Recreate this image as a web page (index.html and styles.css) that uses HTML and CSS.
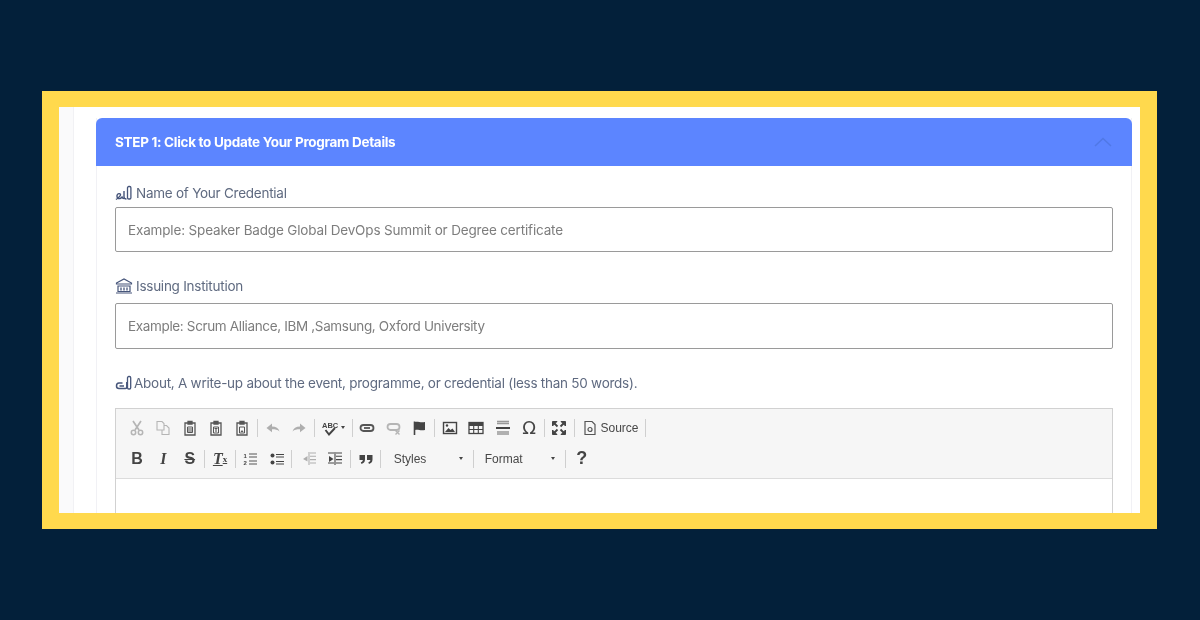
FILE: index.html
```html
<!DOCTYPE html>
<html lang="en">
<head>
  <meta charset="UTF-8">
  <title>Update Program Details</title>
  <link rel="stylesheet" href="styles.css">
</head>
<body>
<div class="frame">
  <div class="strip"></div>
  <div class="card">
    <div class="card-head">
      <span>STEP 1: Click to Update Your Program Details</span>
      <svg class="chevron" width="18" height="10" viewBox="0 0 18 10"><path d="M1 9 9 1.5 17 9" fill="none" stroke="#5078e6" stroke-width="1.5"/></svg>
    </div>
    <div class="card-body">
      <label class="field-label">
        <svg class="label-icon" width="18" height="16" viewBox="0 0 18 16"><path d="M1 14.500C3 13 6 11 5.500 9.500 5 8 2.500 8.500 2 10.500 1.700 12.500 3 14 5 13.500c1-.3 1.500-1 2-1.500.3 1 1 1.500 2 1.500" fill="none" stroke="#46557a" stroke-width="1.400"/><path d="M9 6v6c0 1.500 1 2 2.500 2" fill="none" stroke="#46557a" stroke-width="1.400"/><rect x="12.500" y="1.500" width="3.400" height="12.500" rx="1.300" fill="none" stroke="#46557a" stroke-width="1.300"/></svg>
        Name of Your Credential
      </label>
      <input class="text-input first" type="text" placeholder="Example: Speaker Badge Global DevOps Summit or Degree certificate">

      <label class="field-label second">
        <svg class="label-icon" width="18" height="16" viewBox="0 0 18 16"><path d="M1.500 5 9 1l7.500 4v1h-15zM1 15h16M3 8h12v5.500H3z" fill="none" stroke="#46557a" stroke-width="1.200"/><path d="M6 9.500v3M9 9.500v3M12 9.500v3" stroke="#46557a" stroke-width="1.300"/></svg>
        Issuing Institution
      </label>
      <input class="text-input institution" type="text" placeholder="Example: Scrum Alliance, IBM ,Samsung, Oxford University">

      <label class="field-label third">
        <svg class="label-icon tight" width="17" height="16" viewBox="0 0 17 16"><path d="M7.500 8H4C2.200 8 1.500 9.500 1.500 11S2.500 13.500 4 13.500h6.500c1 0 1.300-.5 1.300-1.500V7M4.500 11H9" fill="none" stroke="#46557a" stroke-width="1.500"/><rect x="12.500" y="1.500" width="3.200" height="12.500" rx="1.300" fill="none" stroke="#46557a" stroke-width="1.300"/></svg>
        About, A write-up about the event, programme, or credential (less than 50 words).
      </label>

      <div class="editor">
        <div class="toolbar">
          <div class="tb-row">
            <span class="tb-btn off"><svg width="16" height="16" viewBox="0 0 16 16"><path d="M4 1l6 9M12 1 6 10" stroke="#555" stroke-width="1.700" fill="none"/><circle cx="4.500" cy="12.500" r="2.200" fill="none" stroke="#555" stroke-width="1.500"/><circle cx="11.500" cy="12.500" r="2.200" fill="none" stroke="#555" stroke-width="1.500"/></svg></span>
            <span class="tb-btn off"><svg width="16" height="16" viewBox="0 0 16 16"><path d="M2 1.500h5l2 2V10H2zM9 5.500h2.500l2.500 2.500v6.500H7V10" fill="none" stroke="#555" stroke-width="1.100"/></svg></span>
            <span class="tb-btn"><svg width="16" height="16" viewBox="0 0 16 16"><path d="M3 3h10v12H3zM6 1.500h4V4H6z" fill="none" stroke="#555" stroke-width="1.300"/><path d="M5.500 7h5v5.500h-5zM5.500 9h5M5.500 11h5" fill="none" stroke="#555" stroke-width="1"/></svg></span>
            <span class="tb-btn"><svg width="16" height="16" viewBox="0 0 16 16"><path d="M3 3h10v12H3zM6 1.500h4V4H6z" fill="none" stroke="#555" stroke-width="1.300"/><path d="M5.500 7h5v6h-5z" fill="none" stroke="#555" stroke-width="1"/><path d="M6.500 8.500h3M8 8.500V12" stroke="#555" stroke-width="1.100"/></svg></span>
            <span class="tb-btn"><svg width="16" height="16" viewBox="0 0 16 16"><path d="M3 3h10v12H3zM6 1.500h4V4H6z" fill="none" stroke="#555" stroke-width="1.300"/><path d="M5.500 7h5v6h-5z" fill="none" stroke="#555" stroke-width="1"/><path d="M6.500 12l1.500-2 1.500 2z" fill="#555"/></svg></span>
            <i class="tb-sep"></i>
            <span class="tb-btn off"><svg width="16" height="16" viewBox="0 0 16 16"><path d="M1.500 8 7 3.500V6.500c4 0 6.500 1.500 7.500 5-2-2-4-2.300-7.500-2.300v3z" fill="#444"/></svg></span>
            <span class="tb-btn off"><svg width="16" height="16" viewBox="0 0 16 16"><path d="M14.500 8 9 3.500V6.500c-4 0-6.500 1.500-7.500 5 2-2 4-2.300 7.500-2.300v3z" fill="#444"/></svg></span>
            <i class="tb-sep"></i>
            <span class="tb-btn spell"><svg width="16" height="16" viewBox="0 0 16 16"><text x="0" y="8" class="abc">ABC</text><path d="M3.500 10 7 14.500 13 8" fill="none" stroke="#444" stroke-width="1.900"/></svg><b class="caret"></b></span>
            <i class="tb-sep"></i>
            <span class="tb-btn"><svg width="16" height="16" viewBox="0 0 16 16"><rect x="1.500" y="5" width="13" height="6" rx="3" fill="none" stroke="#555" stroke-width="1.800"/><path d="M5 8h6" stroke="#555" stroke-width="1.800"/></svg></span>
            <span class="tb-btn off"><svg width="16" height="16" viewBox="0 0 16 16"><rect x="1.500" y="4" width="12" height="6" rx="3" fill="none" stroke="#555" stroke-width="1.800"/><path d="M9.500 10.500l4 4M13.500 10.500l-4 4" stroke="#555" stroke-width="1.400"/></svg></span>
            <span class="tb-btn"><svg width="16" height="16" viewBox="0 0 16 16"><path d="M2.500 1.500V15" stroke="#444" stroke-width="1.600"/><path d="M3 2c3-1 5 1 10 0v8c-5 1-7-1-10 0z" fill="#444"/></svg></span>
            <i class="tb-sep"></i>
            <span class="tb-btn"><svg width="16" height="16" viewBox="0 0 16 16"><rect x="1.500" y="2.500" width="13" height="11" fill="none" stroke="#444" stroke-width="1.400"/><path d="M3 12l3.500-4 2 2 2-1.500L13 12z" fill="#444"/><circle cx="5" cy="5.500" r="1.200" fill="#444"/></svg></span>
            <span class="tb-btn"><svg width="16" height="16" viewBox="0 0 16 16"><rect x="1" y="2.500" width="14" height="11" fill="none" stroke="#444" stroke-width="1.300"/><path d="M1 3h14v3H1z" fill="#444"/><path d="M1 9.500h14M5.700 6v7M10.300 6v7" stroke="#444" stroke-width="1.100"/></svg></span>
            <span class="tb-btn"><svg width="16" height="16" viewBox="0 0 16 16"><path d="M2 1.500h12M2 3.500h12M2 12h12M2 14h12" stroke="#999" stroke-width="1.300"/><path d="M1 8h14" stroke="#444" stroke-width="2"/></svg></span>
            <span class="tb-btn omega">Ω</span>
            <i class="tb-sep"></i>
            <span class="tb-btn"><svg width="16" height="16" viewBox="0 0 16 16"><path d="M1.500 1.500h4.500L1.500 6zM14.500 1.500H10L14.500 6zM1.500 14.500H6L1.500 10zM14.500 14.500H10l4.500-4.500z" fill="#444" stroke="#444"/><path d="M3 3l3.500 3.500M13 3 9.500 6.500M3 13l3.500-3.500M13 13 9.500 9.500" stroke="#444" stroke-width="1.800"/></svg></span>
            <i class="tb-sep"></i>
            <span class="tb-btn source"><svg width="14" height="16" viewBox="0 0 14 16"><path d="M2 1.500h7l3 3v10H2z" fill="none" stroke="#555" stroke-width="1.200"/><circle cx="7" cy="9.500" r="2" fill="none" stroke="#555" stroke-width="1.200"/></svg>Source</span>
            <i class="tb-sep"></i>
          </div>
          <div class="tb-row">
            <span class="tb-btn glyph bold">B</span>
            <span class="tb-btn glyph italic">I</span>
            <span class="tb-btn glyph strike">S</span>
            <i class="tb-sep"></i>
            <span class="tb-btn glyph clear">T<sub>x</sub></span>
            <i class="tb-sep"></i>
            <span class="tb-btn"><svg width="16" height="16" viewBox="0 0 16 16"><text x="1.500" y="7" class="num">1</text><text x="1.500" y="14" class="num">2</text><path d="M7 3h8M7 6h8M7 10h8M7 13h8" stroke="#555" stroke-width="1.200"/></svg></span>
            <span class="tb-btn"><svg width="16" height="16" viewBox="0 0 16 16"><circle cx="3.500" cy="4.500" r="2" fill="#444"/><circle cx="3.500" cy="11.500" r="2" fill="#444"/><path d="M7 3.500h8M7 6h8M7 10.500h8M7 13h8" stroke="#444" stroke-width="1.200"/></svg></span>
            <i class="tb-sep"></i>
            <span class="tb-btn off shifted"><svg width="16" height="16" viewBox="0 0 16 16"><path d="M9 2h6M9 5.300h6M9 8.600h6M9 12h6M8 1v13" stroke="#444" stroke-width="1.100"/><path d="M6.500 5v5.500L2 8z" fill="#444"/></svg></span>
            <span class="tb-btn"><svg width="16" height="16" viewBox="0 0 16 16"><path d="M1 2h6M1 12h6M9 2h6M9 5.300h6M9 8.600h6M9 12h6M8 1v13" stroke="#444" stroke-width="1.100"/><path d="M2 5v6L6.500 8z" fill="#444"/></svg></span>
            <i class="tb-sep"></i>
            <span class="tb-btn"><svg width="16" height="16" viewBox="0 0 16 16"><path d="M1.500 4h5.500v4.500c0 2.500-1.500 3.800-3.500 4.500L2.800 11.300C4 10.900 4.700 10.200 4.900 9H1.500zM9 4h5.500v4.500c0 2.500-1.500 3.800-3.500 4.500l-.7-1.700c1.200-.4 1.900-1.100 2.100-2.300H9z" fill="#444"/></svg></span>
            <i class="tb-sep"></i>
            <span class="tb-combo styles">Styles<b class="caret"></b></span>
            <i class="tb-sep"></i>
            <span class="tb-combo format">Format<b class="caret"></b></span>
            <i class="tb-sep"></i>
            <span class="tb-btn glyph help">?</span>
          </div>
        </div>
        <div class="editor-area"></div>
      </div>
    </div>
  </div>
</div>
</body>
</html>
```

FILE: styles.css
```css
* {
  box-sizing: border-box;
}
html, body {
  margin: 0;
  height: 620px;
  overflow: hidden;
}
body {
  background: #03203a;
  padding: 91px 43px 91px 42px;
  font-family: Inter, 'Open Sans', sans-serif;
}
.frame {
  display: flex;
  height: 438px;
  background: #fff;
  border: solid #ffd94d;
  border-width: 16px 17px;
  overflow: hidden;
}
.strip {
  flex: none;
  width: 15px;
  background: #fafafb;
  border-right: 1px solid #f1f1f4;
}
.card {
  flex: none;
  width: 1036px;
  margin: 11px 0 0 22px;
  border-left: 1px solid #f1f1f5;
  border-right: 1px solid #f1f1f5;
  filter: blur(0.3px);
}
.card-head {
  display: flex;
  align-items: center;
  justify-content: space-between;
  height: 48px;
  margin: 0 -1px;
  padding: 0 20px 0 19px;
  background: #5c85ff;
  border-radius: 6px 6px 0 0;
  color: #fff;
  font-size: 13.5px;
  font-weight: 700;
  letter-spacing: -0.3px;
}
.card-body {
  padding: 17px 18px 0;
}
.field-label {
  display: flex;
  align-items: center;
  height: 20px;
  color: #5f6a80;
  font-size: 13.5px;
  letter-spacing: -0.25px;
}
.field-label.second {
  margin-top: 24px;
}
.field-label.third {
  margin-top: 24px;
}
.label-icon {
  margin-right: 3px;
}
.label-icon.tight {
  margin-right: 2px;
}
.text-input {
  display: block;
  width: 100%;
  height: 46px;
  padding: 0 12px;
  margin-top: 7px;
  border: 1px solid #9a9a9a;
  border-radius: 2px;
  font: 13.5px Inter, 'Open Sans', sans-serif;
  letter-spacing: -0.16px;
  outline: none;
}
.text-input.first {
  height: 45px;
  margin-top: 4px;
}
.text-input.institution {
  letter-spacing: -0.35px;
}
.text-input::placeholder {
  color: #7d7d7d;
  opacity: 1;
}
.editor {
  margin-top: 15px;
  border: 1px solid #d1d1d1;
  border-bottom: none;
}
.toolbar {
  height: 70px;
  padding: 3px 8px 0;
  background: #f6f6f6;
  border-bottom: 1px solid #dcdcdc;
}
.tb-row {
  display: flex;
  align-items: center;
  height: 31px;
}
.tb-btn {
  flex: none;
  display: flex;
  align-items: center;
  justify-content: center;
  width: 26.3px;
  height: 26px;
  color: #444;
}
.tb-btn.off {
  opacity: 0.4;
}
.tb-btn.shifted {
  margin-left: 2px;
}
.tb-btn svg text {
  fill: #444;
  font-family: 'Liberation Sans', sans-serif;
}
.abc {
  font-size: 7.5px;
  font-weight: 700;
}
.num {
  font-size: 6px;
  font-weight: 700;
}
.tb-sep {
  flex: none;
  width: 1px;
  height: 18px;
  margin: 0 1.5px;
  background: #cfcfcf;
}
.tb-btn.spell {
  width: 34px;
  gap: 3px;
}
.caret {
  width: 0;
  height: 0;
  border: 2.5px solid transparent;
  border-top: 3px solid #444;
  border-bottom: none;
}
.tb-btn.omega {
  font: 18px 'DejaVu Sans', sans-serif;
}
.tb-btn.source {
  width: 67px;
  justify-content: flex-start;
  gap: 3px;
  padding-left: 7px;
  color: #484848;
  font: 12px 'Liberation Sans', Arial, sans-serif;
}
.tb-btn.glyph {
  font-family: 'Liberation Sans', Arial, sans-serif;
  font-size: 16px;
  font-weight: 700;
}
.tb-btn.italic {
  font-family: 'Liberation Serif', serif;
  font-style: italic;
  font-size: 16px;
}
.tb-btn.strike {
  text-decoration: line-through;
}
.tb-btn.clear {
  font-family: 'Liberation Serif', serif;
  font-style: italic;
  text-decoration: underline;
  font-size: 16px;
}
.tb-btn.clear sub {
  font-size: 9px;
  font-style: normal;
}
.tb-btn.help {
  font-size: 18px;
  margin-left: 1px;
}
.tb-combo {
  flex: none;
  display: flex;
  align-items: center;
  justify-content: space-between;
  height: 26px;
  color: #484848;
  font: 12px 'Liberation Sans', Arial, sans-serif;
}
.tb-combo.styles {
  width: 89px;
  padding: 0 9px 0 11px;
}
.tb-combo.format {
  width: 88px;
  padding: 0 9px;
}
.editor-area {
  height: 60px;
  background: #fff;
}
```
